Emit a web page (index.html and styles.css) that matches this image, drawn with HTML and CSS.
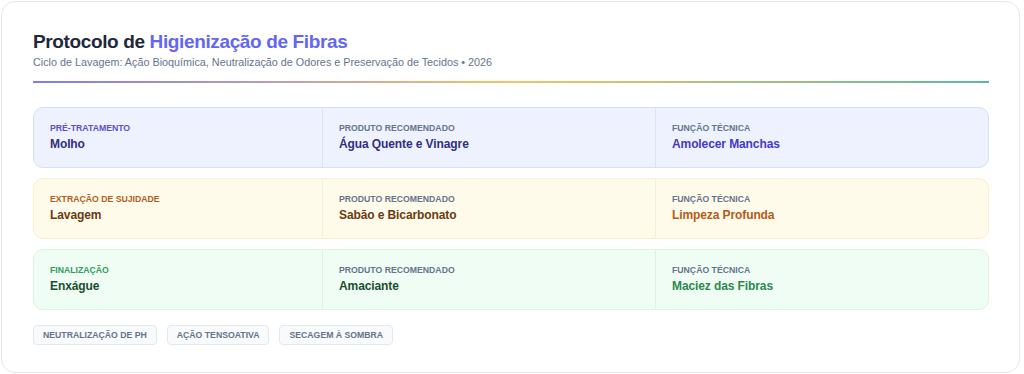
FILE: index.html
```html
<!DOCTYPE html>
<html lang="pt">
<head>
<meta charset="utf-8">
<link rel="stylesheet" href="styles.css">
</head>
<body>
<div class="card">
  <header class="head">
    <h1 class="title">Protocolo de <span class="accent">Higienização de Fibras</span></h1>
    <p class="subtitle">Ciclo de Lavagem: Ação Bioquímica, Neutralização de Odores e Preservação de Tecidos • 2026</p>
  </header>
  <div class="rule"></div>
  <div class="rows">
    <div class="row row-indigo">
      <div class="cell"><div class="label">Pré-tratamento</div><div class="value">Molho</div></div>
      <div class="cell"><div class="label muted">Produto recomendado</div><div class="value">Água Quente e Vinagre</div></div>
      <div class="cell"><div class="label muted">Função técnica</div><div class="value strong">Amolecer Manchas</div></div>
    </div>
    <div class="row row-amber">
      <div class="cell"><div class="label">Extração de sujidade</div><div class="value">Lavagem</div></div>
      <div class="cell"><div class="label muted">Produto recomendado</div><div class="value">Sabão e Bicarbonato</div></div>
      <div class="cell"><div class="label muted">Função técnica</div><div class="value strong">Limpeza Profunda</div></div>
    </div>
    <div class="row row-green">
      <div class="cell"><div class="label">Finalização</div><div class="value">Enxágue</div></div>
      <div class="cell"><div class="label muted">Produto recomendado</div><div class="value">Amaciante</div></div>
      <div class="cell"><div class="label muted">Função técnica</div><div class="value strong">Maciez das Fibras</div></div>
    </div>
  </div>
  <div class="tags">
    <span class="tag">Neutralização de pH</span>
    <span class="tag">Ação tensoativa</span>
    <span class="tag">Secagem à sombra</span>
  </div>
</div>
</body>
</html>
```
FILE: styles.css
```css
* { box-sizing: border-box; }
html, body { margin: 0; background: #ffffff; }
body {
  padding: 1px 4px 1px 1px;
  font-family: "Liberation Sans", Arial, sans-serif;
}
.card {
  height: 372px;
  border: 1px solid #e5e7eb;
  border-radius: 14px;
  background: #ffffff;
  padding: 28px 30px 0 31px;
}
.head { margin: 0; }
.title {
  margin: 0;
  font-size: 19px;
  line-height: 24px;
  font-weight: 700;
  color: #1e293b;
  letter-spacing: -0.37px;
}
.accent { color: #6366f1; }
.subtitle {
  margin: 1px 0 0;
  font-size: 10.8px;
  line-height: 14px;
  color: #64748b;
}
.rule {
  margin-top: 12px;
  height: 2px;
  background: linear-gradient(90deg, #6366f1 0%, #f5b84a 50%, #3fae8c 100%);
  opacity: 0.85;
}
.rows {
  margin-top: 24px;
  display: flex;
  flex-direction: column;
  gap: 10px;
}
.row {
  display: grid;
  grid-template-columns: 288px 1fr 1fr;
  height: 61px;
  border: 1px solid;
  border-radius: 10px;
}
.cell {
  padding: 15px 16px 0;
  border-left: 1px solid;
}
.cell:first-child { border-left: none; }
.label {
  font-size: 8.7px;
  line-height: 11px;
  font-weight: 700;
  text-transform: uppercase;
}
.value {
  margin-top: 2px;
  font-size: 12px;
  line-height: 16px;
  font-weight: 700;
  letter-spacing: -0.1px;
}
.row-indigo { background: #eef2ff; border-color: #d8def7; }
.row-indigo .cell { border-color: #dde2f6; }
.row-indigo .label { color: #5b4fd1; }
.row-indigo .value { color: #312e81; }
.row-indigo .value.strong { color: #4338ca; }

.row-amber { background: #fffbeb; border-color: #fcefc8; }
.row-amber .cell { border-color: #f8efd3; }
.row-amber .label { color: #b45a1a; }
.row-amber .value { color: #6b3a12; }
.row-amber .value.strong { color: #b45a1a; }

.row-green { background: #f0fdf4; border-color: #d9f5e3; }
.row-green .cell { border-color: #dcf3e4; }
.row-green .label { color: #2f9e5a; }
.row-green .value { color: #1a4d32; }
.row-green .value.strong { color: #2a8a4e; }

.row .label.muted { color: #64748b; }

.tags {
  margin-top: 15px;
  display: flex;
  gap: 10px;
}
.tag {
  display: inline-block;
  padding: 4px 9px;
  font-size: 8.7px;
  line-height: 10px;
  font-weight: 700;
  text-transform: uppercase;
  color: #64748b;
  background: #f8fafc;
  border: 1px solid #e2e8f0;
  border-radius: 4px;
}
```
